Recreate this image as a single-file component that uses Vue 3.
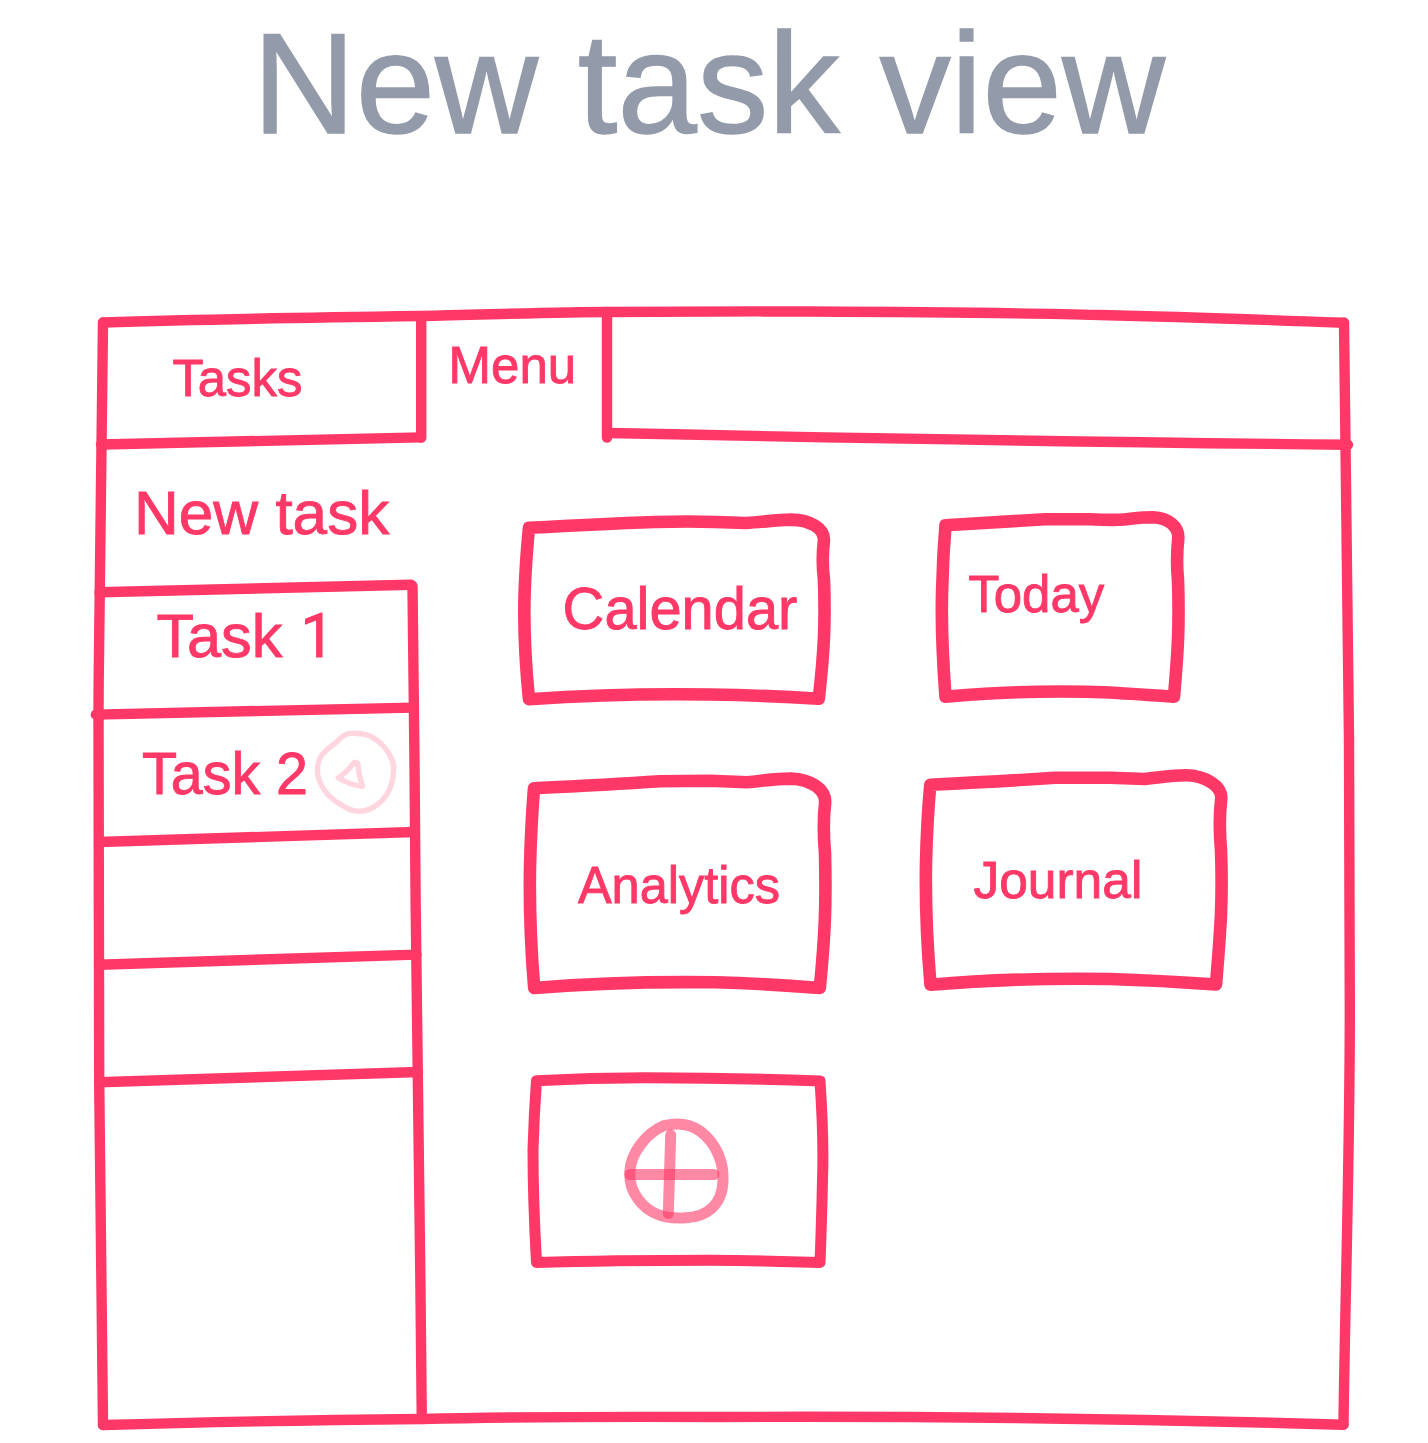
<script setup>
const frame = [
  'M103 322.5 C210 319 310 317.5 421 316 C490 314.5 560 312 607 312 C690 311.5 740 311.3 800 311.5 C900 312 1010 312.5 1100 315 C1190 317 1270 320 1344 322.8',
  'M1344 322.8 L1345.5 445 C1346 560 1348.5 650 1349 740 C1349.8 850 1350.4 930 1349.8 1010 C1349.8 1160 1345 1300 1343.5 1424.5',
  'M103 1425 C220 1421.5 320 1420 422 1419 C500 1417 600 1416.5 720 1417 C950 1416 1150 1419 1343.5 1424.7',
  'M103 322.5 C101.5 420 100.5 500 100 570 C99 640 98.7 670 98.5 714 C98.3 850 98.4 970 99.2 1082 C100 1220 102.5 1330 103 1425',
]

const tabs = [
  'M421.2 317 V437.5',
  'M101 444.5 Q250 441 421 437.4',
  'M607 312 V437.5',
  'M609 433 Q960 440.5 1348 444.8',
]

const sidebar = [
  'M412.5 586 C413.5 680 415.2 800 415.6 900 C417 1000 420 1230 421.8 1419',
  'M99.5 592.3 Q250 588 411 584.7',
  'M95.8 714.6 Q250 711 413 707.6',
  'M99 842 L414 832',
  'M99 964.8 L416.5 954.6',
  'M99 1082.3 L418 1072',
]

const cards = [
  'M529 527.8 Q600 524 655 522 Q690 521 715 522 L746 523 C763 522 775 520 791 519.6 C810 520 824 528 824 540 Q821.5 560 824 580 C825.5 625 824 652 818.8 698.8 Q770 695.5 710 694.5 Q620 693 529 699.3 Q523 640 524.7 590 Q526 557 529 527.8 Z',
  'M945.5 525.3 Q1005 521.5 1045 519.3 L1090 519.2 Q1105 520 1118 519.8 C1130 519 1140 517.2 1153 517.2 C1169 518 1178.8 527 1178.3 538 Q1176 560 1178 580 C1179.5 625 1178 650 1174 696.8 Q1120 692.5 1085 691.7 Q1010 690.5 945.5 696.8 Q940.5 630 942.3 585 Q943 555 945.5 525.3 Z',
  'M534 788.2 Q610 784.5 660 781.2 L710 780.8 L747 782.2 C765 780.5 775 778.6 791 778.6 C811 779.5 825.3 789 825.2 802 Q822.5 825 825 853 C826.3 905 825 935 819.8 988 Q765 983.5 715 982.3 Q620 981 534.2 988 Q529 925 530 867 Q531 825 534 788.2 Z',
  'M930.3 784.7 Q1000 781.5 1055 777.8 L1110 777.7 L1145 779 C1163 777 1175 775 1187 775.2 C1206 776 1221.8 786 1221.3 798 Q1218.5 822 1221 850 C1223 905 1220 935 1216 984.5 Q1160 980.5 1110 979 Q1015 977.5 930.5 984.7 Q925 920 926 863 Q927 820 930.3 784.7 Z',
]

const addCard =
  'M536.5 1080.7 Q590 1078 645 1077.8 Q740 1078 820 1081 Q824 1140 822.5 1180 Q821.5 1225 820 1262.5 Q760 1260.5 710 1260.2 Q610 1260.2 536.5 1262.5 Q533 1200 533 1150 Q534 1115 536.5 1080.7 Z'

const addIcon = [
  'M664 1125.6 C679 1122 691 1124.5 700 1131 C716 1143 724 1162 723 1181 C722 1206 706 1216.5 686 1217.8 C664 1219.5 649 1214 638 1199 C626 1183 627 1162 641 1144 Q650 1132 664 1125.6 Z',
  'M630 1174.5 H713.8',
  'M670.7 1135 L668.3 1213.5',
]

const badge = [
  'M353.3 733.3 Q363 733 370 736 Q378 740 384 746.7 Q389.5 753 392 760 Q394.5 767 393.3 773.3 Q393 783 388.3 791.7 Q384 800 376.7 805 Q369 811 360 811.2 Q351 811.5 343.3 806 Q335 802 328.3 795 Q322 788 319.3 780 Q317 775 317.5 768 Q318 761 321.7 755 Q327 749 335 743.3 Q339 739 343.3 736 Q348 733 353.3 733.3 Z',
  'M354.5 762.3 Q345 774 338.2 777.8 Q350 785 362.5 786.3 Q358.5 775 357.7 763',
]

const labels = [
  { text: 'Tasks', x: 172.4, y: 396, size: 52.5, width: 130 },
  { text: 'Menu', x: 448.6, y: 383, size: 52.5, width: 127.6 },
  { text: 'New task', x: 134, y: 533.5, size: 61.5, width: 255.2 },
  { text: 'Task', x: 156.4, y: 657, size: 61.5, width: 126 },
  { text: 'Task 2', x: 142, y: 794.2, size: 59.5, width: 166 },
  { text: 'Calendar', x: 562.6, y: 629.2, size: 60, width: 234.8 },
  { text: 'Today', x: 968.3, y: 612, size: 52.5, width: 136 },
  { text: 'Analytics', x: 577.9, y: 903, size: 52.5, width: 202 },
  { text: 'Journal', x: 973.4, y: 897.7, size: 52.5, width: 169 },
]
</script>

<template>
  <main class="board">
    <svg class="canvas" viewBox="0 0 1428 1443" role="img" aria-label="New task view">
      <text class="title" x="252.6" y="133.4" textLength="912.4" lengthAdjust="spacingAndGlyphs">New task view</text>

      <g class="pen">
        <path v-for="d in frame" :key="d" :d="d" />
        <path v-for="d in tabs" :key="d" :d="d" />
        <path v-for="d in sidebar" :key="d" :d="d" />
      </g>
      <g class="pen pen-bold">
        <path v-for="d in cards" :key="d" :d="d" />
      </g>
      <path class="pen pen-medium" :d="addCard" />

      <g class="marker">
        <path v-for="d in addIcon" :key="d" :d="d" />
      </g>
      <g class="badge">
        <path v-for="d in badge" :key="d" :d="d" />
      </g>

      <text
        v-for="label in labels"
        :key="label.text"
        class="label"
        :x="label.x"
        :y="label.y"
        :font-size="label.size"
        :textLength="label.width"
        lengthAdjust="spacingAndGlyphs"
      >{{ label.text }}</text>
      <text class="label digit" x="300.5" y="657">1</text>
    </svg>
  </main>
</template>

<style>
body {
  margin: 0;
  background: #fff;
}
</style>

<style scoped>
.board {
  width: 1428px;
  height: 1443px;
  overflow: hidden;
  background: #fff;
}

.canvas {
  display: block;
  width: 100%;
  height: 100%;
  font-family: "Liberation Sans", Arial, Helvetica, sans-serif;
}

.title {
  font-size: 143px;
  fill: #939baa;
  stroke: #939baa;
  stroke-width: 1.4;
}

.label {
  fill: #ff3868;
  stroke: #ff3868;
  stroke-width: 0.9;
}

.digit {
  font-family: Roboto, sans-serif;
  font-size: 60.5px;
}

.pen {
  fill: none;
  stroke: #ff3868;
  stroke-width: 10.4;
  stroke-linecap: round;
  stroke-linejoin: round;
}

.pen-medium {
  stroke-width: 11;
}

.pen-bold {
  stroke-width: 12.6;
}

.marker {
  fill: none;
  stroke: #ff3868;
  stroke-opacity: 0.6;
  stroke-width: 11;
  stroke-linecap: round;
  stroke-linejoin: round;
}

.badge {
  fill: none;
  stroke: #ffd6e0;
  stroke-width: 5.4;
  stroke-linecap: round;
  stroke-linejoin: round;
}
</style>
